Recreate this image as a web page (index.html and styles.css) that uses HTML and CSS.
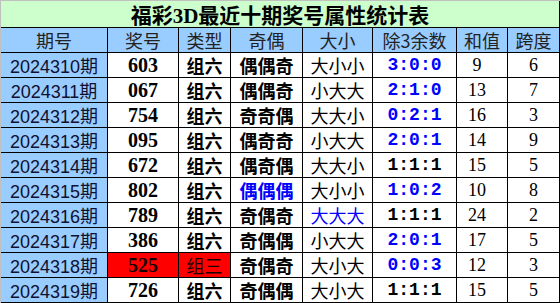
FILE: index.html
```html
<!DOCTYPE html>
<html lang="zh">
<head>
<meta charset="utf-8">
<title>福彩3D最近十期奖号属性统计表</title>
<link rel="stylesheet" href="styles.css">
</head>
<body>
<div class="sheet">
  <div class="title">福彩3D最近十期奖号属性统计表</div>

  <div class="hd">期号</div><div class="hd">奖号</div><div class="hd">类型</div><div class="hd">奇偶</div><div class="hd">大小</div><div class="hd">除3余数</div><div class="hd">和值</div><div class="hd">跨度</div>

  <div class="issue">2024310期</div><div class="num">603</div><div class="cb">组六</div><div class="cb">偶偶奇</div><div class="cr">大小小</div><div class="ratio blue">3:0:0</div><div class="val sum">9</div><div class="val">6</div>
  <div class="issue">2024311期</div><div class="num">067</div><div class="cb">组六</div><div class="cb">偶偶奇</div><div class="cr">小大大</div><div class="ratio blue">2:1:0</div><div class="val sum">13</div><div class="val">7</div>
  <div class="issue">2024312期</div><div class="num">754</div><div class="cb">组六</div><div class="cb">奇奇偶</div><div class="cr">大大小</div><div class="ratio blue">0:2:1</div><div class="val sum">16</div><div class="val">3</div>
  <div class="issue">2024313期</div><div class="num">095</div><div class="cb">组六</div><div class="cb">偶奇奇</div><div class="cr">小大大</div><div class="ratio blue">2:0:1</div><div class="val sum">14</div><div class="val">9</div>
  <div class="issue">2024314期</div><div class="num">672</div><div class="cb">组六</div><div class="cb">偶奇偶</div><div class="cr">大大小</div><div class="ratio">1:1:1</div><div class="val sum">15</div><div class="val">5</div>
  <div class="issue">2024315期</div><div class="num">802</div><div class="cb">组六</div><div class="cb blue">偶偶偶</div><div class="cr">大小小</div><div class="ratio blue">1:0:2</div><div class="val sum">10</div><div class="val">8</div>
  <div class="issue">2024316期</div><div class="num">789</div><div class="cb">组六</div><div class="cb">奇偶奇</div><div class="cr blue">大大大</div><div class="ratio">1:1:1</div><div class="val sum">24</div><div class="val">2</div>
  <div class="issue">2024317期</div><div class="num">386</div><div class="cb">组六</div><div class="cb">奇偶偶</div><div class="cr">小大大</div><div class="ratio blue">2:0:1</div><div class="val sum">17</div><div class="val">5</div>
  <div class="issue">2024318期</div><div class="num red">525</div><div class="cb red thin">组三</div><div class="cb">奇偶奇</div><div class="cr">大小大</div><div class="ratio blue">0:0:3</div><div class="val sum">12</div><div class="val">3</div>
  <div class="issue">2024319期</div><div class="num">726</div><div class="cb">组六</div><div class="cb">奇偶偶</div><div class="cr">大小大</div><div class="ratio">1:1:1</div><div class="val sum">15</div><div class="val">5</div>
</div>
</body>
</html>
```

FILE: styles.css
```css
html, body {
  margin: 0;
  padding: 0;
  background: #ffffff;
}

.sheet {
  display: grid;
  grid-template-columns: 106px 70px 51px 71px 69px 83px 50px 51px;
  grid-template-rows: 26px repeat(11, 24px);
  gap: 1px;
  background: #000000;
  border-left: 1px solid #c0c0c0;
  border-top: 1px solid #c0c0c0;
  padding: 0 1px 1px 0;
  box-sizing: border-box;
  width: 560px;
}

.sheet > div {
  display: flex;
  align-items: center;
  justify-content: center;
  background: #ffffff;
  color: #000000;
  white-space: nowrap;
  overflow: hidden;
}

.title {
  grid-column: 1 / -1;
  background: #ccffcc !important;
  font-family: "Liberation Serif", "Noto Sans CJK SC", serif;
  font-weight: 700;
  font-size: 21px;
  color: #0a0a0a;
}

.hd {
  background: #99ccff !important;
  font-family: "Noto Sans CJK SC", sans-serif;
  font-weight: 400;
  font-size: 18px;
  color: #222222 !important;
}

.issue {
  background: #99ccff !important;
  font-family: "Liberation Sans", "Noto Sans CJK SC", sans-serif;
  font-size: 18px;
  color: #101030 !important;
}

.num {
  font-family: "Liberation Serif", serif;
  font-weight: 700;
  font-size: 20px;
}

.cb {
  font-family: "Noto Sans CJK SC", sans-serif;
  font-weight: 700;
  font-size: 18px;
}

.cr {
  font-family: "Noto Sans CJK SC", sans-serif;
  font-weight: 400;
  font-size: 18px;
}

.ratio {
  font-family: "Liberation Mono", monospace;
  font-weight: 700;
  font-size: 18px;
}

.val {
  font-family: "Liberation Serif", serif;
  font-size: 18px;
}

.sum {
  padding-right: 10px;
}

.sheet > .blue {
  color: #0000ff;
}

.sheet > .red {
  background: #ff0000;
  color: #1a0000;
}

.sheet > .thin {
  font-weight: 400;
}
```
